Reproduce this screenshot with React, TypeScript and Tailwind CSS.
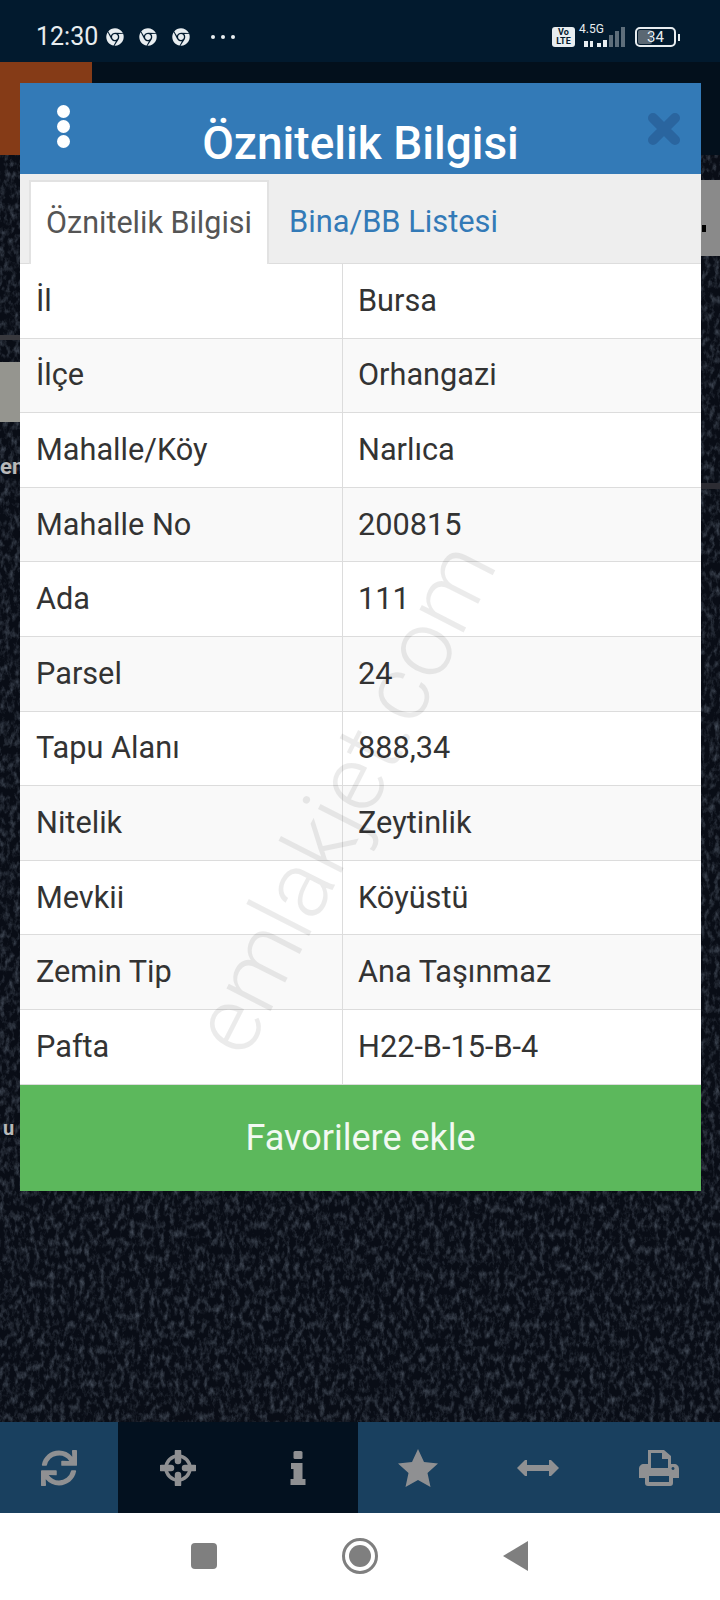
import { FaChrome, FaSync } from 'react-icons/fa';

const rows = [
  ['İl', 'Bursa'],
  ['İlçe', 'Orhangazi'],
  ['Mahalle/Köy', 'Narlıca'],
  ['Mahalle No', '200815'],
  ['Ada', '111'],
  ['Parsel', '24'],
  ['Tapu Alanı', '888,34'],
  ['Nitelik', 'Zeytinlik'],
  ['Mevkii', 'Köyüstü'],
  ['Zemin Tip', 'Ana Taşınmaz'],
  ['Pafta', 'H22-B-15-B-4'],
];

function StatusBar() {
  return (
    <div className="h-[62px] bg-[#021a2e] flex items-center justify-between pt-[12px] pl-[36px] pr-[40px] text-[#e8edf0]">
      <div className="flex items-center">
        <span className="text-[25px] mr-[8px]">12:30</span>
        <div className="flex items-center gap-[15px]">
          <FaChrome className="w-[18px] h-[18px]" />
          <FaChrome className="w-[18px] h-[18px]" />
          <FaChrome className="w-[18px] h-[18px]" />
        </div>
        <div className="flex gap-[6px] ml-[21px]">
          <span className="w-[4px] h-[4px] rounded-full bg-[#e8edf0]" />
          <span className="w-[4px] h-[4px] rounded-full bg-[#e8edf0]" />
          <span className="w-[4px] h-[4px] rounded-full bg-[#e8edf0]" />
        </div>
      </div>
      <div className="flex items-center">
        <div className="w-[23px] h-[20px] bg-[#e8edf0] rounded-[3px] text-[#021a2e] text-[9px] leading-[9px] font-bold text-center pt-[1px]">
          Vo
          <br />
          LTE
        </div>
        <div className="relative ml-[4px] mr-[10px] w-[46px] h-[22px]">
          <div className="absolute left-0 -top-[3px] text-[12px] leading-[12px]">4.5G</div>
          <div className="absolute left-0 right-0 bottom-[1px] flex items-end gap-[2px] justify-end">
            <span className="w-[4px] h-[6px] bg-[#e8edf0]" />
            <span className="w-[3px] h-[6px] bg-[#e8edf0] mr-[2px]" />
            <span className="w-[4px] h-[4px] bg-[#e8edf0]" />
            <span className="w-[4px] h-[7px] bg-[#e8edf0]" />
            <span className="w-[4px] h-[12px] bg-[#e8edf0]/40" />
            <span className="w-[4px] h-[16px] bg-[#e8edf0]/40" />
            <span className="w-[4px] h-[20px] bg-[#e8edf0]/40" />
          </div>
        </div>
        <div className="w-[41px] h-[20px] border-2 border-[#e8edf0] rounded-[5px] relative flex items-center justify-center text-[15px]">
          <span className="absolute left-[1px] top-[1px] bottom-[1px] w-[14px] bg-[#5b6873] rounded-[2px]" />
          <span className="relative">34</span>
        </div>
        <span className="w-[2px] h-[7px] bg-[#e8edf0] ml-[2px]" />
      </div>
    </div>
  );
}

function TopBar() {
  return (
    <div className="h-[93px] bg-[#03101c] flex">
      <div className="w-[92px] bg-[#853b17]" />
    </div>
  );
}

function MapArea() {
  return (
    <div className="relative flex-1 bg-[#090d16] overflow-hidden">
      <svg className="w-full h-full" xmlns="http://www.w3.org/2000/svg">
        <filter id="trees">
          <feTurbulence type="fractalNoise" baseFrequency="0.2 0.12" numOctaves="4" seed="11" />
          <feColorMatrix values="0 0 0 0 0.17  0 0 0 0 0.21  0 0 0 0 0.27  0 0 0 1.1 -0.48" />
        </filter>
        <rect width="100%" height="100%" filter="url(#trees)" />
      </svg>
      {/* map labels and roads showing beside the modal */}
      <div className="absolute left-0 top-[207px] w-[20px] h-[60px] bg-[#95958f]" />
      <div className="absolute left-0 top-[180px] w-[20px] h-[5px] bg-[#38383d]" />
      <div className="absolute left-0 top-[299px] text-[22px] leading-[26px] font-bold text-[#b9b9b9]">en</div>
      <div className="absolute left-[3px] top-[961px] text-[20px] leading-[24px] font-bold text-[#b9b9b9]">u</div>
      <div className="absolute right-0 top-[25px] w-[19px] h-[76px] bg-[#8a8a8a]" />
      <div className="absolute right-[14px] top-[70px] w-[4px] h-[7px] bg-black" />
      <div className="absolute right-0 top-[328px] w-[19px] h-[6px] bg-[#2c2c33]" />
    </div>
  );
}

function Modal() {
  return (
    <div className="absolute left-[20px] top-[83px] w-[681px] font-['Roboto',sans-serif]">
      <div className="relative h-[91px] bg-[#337ab7]">
        <div className="absolute left-[37px] top-[22px] flex flex-col gap-[2px]">
          <span className="w-[13px] h-[13px] rounded-full bg-white" />
          <span className="w-[13px] h-[13px] rounded-full bg-white" />
          <span className="w-[13px] h-[13px] rounded-full bg-white" />
        </div>
        <h1 className="pt-[34px] text-center text-[46px] leading-[52px] font-medium text-white">Öznitelik Bilgisi</h1>
        <svg className="absolute left-[628px] top-[30px] w-[32px] h-[32px]" viewBox="0 0 32 32">
          <path d="M5 5 L27 27 M27 5 L5 27" stroke="#2a659f" strokeWidth="10" strokeLinecap="round" fill="none" />
        </svg>
      </div>
      <div className="h-[90px] bg-[#eeeeee] border-b border-[#dddddd] flex pl-[9px] pt-[6px]">
        <div className="w-[240px] h-[84px] bg-white border-2 border-b-0 border-[#e2e2e2] text-[#555555] text-[30.5px] flex items-center justify-center">Öznitelik Bilgisi</div>
        <div className="px-[20px] h-[84px] text-[#337ab7] text-[30.8px] flex items-center">Bina/BB Listesi</div>
      </div>
      <div className="relative bg-white overflow-hidden">
        {rows.map((row, index) => (
          <div key={row[0]} className={`flex h-[74.6px] border-b border-[#dcdcdc] text-[30.7px] text-[#333333] ${index % 2 === 0 ? 'bg-white' : 'bg-[#f9f9f9]'}`}>
            <div className="w-[323px] pl-[16px] border-r border-[#dcdcdc] flex items-center">{row[0]}</div>
            <div className="flex-1 pl-[15px] flex items-center">{row[1]}</div>
          </div>
        ))}
        <div className="absolute left-[197px] top-[735px] text-[94px] leading-none font-light text-black/[0.08] origin-left -rotate-[63deg] whitespace-nowrap">emlakjet.com</div>
      </div>
      <div className="h-[106px] bg-[#5cb85c] flex items-center justify-center text-[#f2f9f2] text-[36px]">Favorilere ekle</div>
    </div>
  );
}

function BottomBar() {
  return (
    <div className="h-[91px] bg-[#19405f] flex text-[#8f9092]">
      <div className="w-[118px] flex items-center justify-center"><FaSync className="w-[36px] h-[36px]" /></div>
      <div className="w-[240px] bg-[#03111f] flex">
        <div className="w-[120px] flex items-center justify-center">
          <svg width="36" height="36" viewBox="0 0 36 36" fill="none" stroke="currentColor">
            <circle cx="18" cy="18" r="12" strokeWidth="3.5" />
            <path d="M18 1.5 V11 M18 25 V34.5 M1.5 18 H11 M25 18 H34.5" strokeWidth="6.5" strokeLinecap="round" />
          </svg>
        </div>
        <div className="w-[120px] flex items-center justify-center">
          <svg width="16" height="34" viewBox="0 0 16 34" fill="currentColor">
            <rect x="3.5" y="0" width="9" height="8" rx="1.5" />
            <path d="M1 12 H12.5 V28 H15.5 V34 H0.5 V28 H3.5 V18 H1 Z" />
          </svg>
        </div>
      </div>
      <div className="w-[120px] flex items-center justify-center">
        <svg width="40" height="38" viewBox="0 0 40 38" fill="currentColor"><path d="M20 0 L26 13 L40 14.5 L29.5 24 L32.5 38 L20 31 L7.5 38 L10.5 24 L0 14.5 L14 13 Z" /></svg>
      </div>
      <div className="w-[120px] flex items-center justify-center">
        <svg width="42" height="16" viewBox="0 0 42 16" fill="currentColor"><path d="M0 8 L8 0 H10 V5 H32 V0 H34 L42 8 L34 16 H32 V11 H10 V16 H8 Z" /></svg>
      </div>
      <div className="flex-1 flex items-center justify-center">
        <svg width="40" height="36" viewBox="0 0 40 36" fill="currentColor" fillRule="evenodd">
          <path d="M9 0 H25 L32 6 V14 H35 C38 14 40 16 40 19 V28 H34 V33 C34 35 33 36 31 36 H9 C7 36 6 35 6 33 V28 H0 V19 C0 16 2 14 5 14 H9 Z M12 3 V18 H29 V9 H23 V3 Z M10 26 V32 H30 V26 Z M34 17 A1.5 1.5 0 1 0 34.01 17 Z" />
        </svg>
      </div>
    </div>
  );
}

function NavBar() {
  return (
    <div className="h-[87px] bg-white flex items-center justify-center pb-[2px]">
      <div className="w-[26px] h-[26px] rounded-[4px] bg-[#7f7f7f] mr-[125px]" />
      <div className="w-[36px] h-[36px] rounded-full border-[3px] border-[#7f7f7f] flex items-center justify-center mr-[125px]">
        <span className="w-[22px] h-[22px] rounded-full bg-[#7f7f7f]" />
      </div>
      <svg width="26" height="30" viewBox="0 0 26 30"><path d="M0 15 L25 0 V30 Z" fill="#7f7f7f" /></svg>
    </div>
  );
}

export default function App() {
  return (
    <div className="relative h-[1600px] w-[720px] flex flex-col overflow-hidden font-['Roboto',sans-serif]">
      <StatusBar />
      <TopBar />
      <MapArea />
      <BottomBar />
      <NavBar />
      <Modal />
    </div>
  );
}
